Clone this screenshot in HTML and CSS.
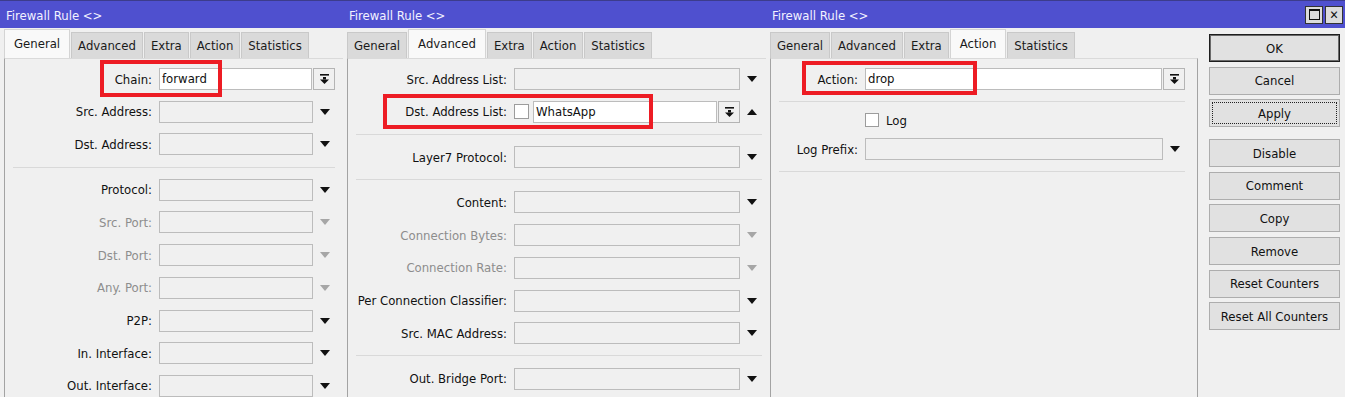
FILE: index.html
```html
<!DOCTYPE html>
<html lang="en">
<head>
    <meta charset="UTF-8">
    <title>Firewall Rule</title>
    <link rel="stylesheet" href="styles.css">
</head>
<body>
    <div class="screen">
        <!-- General tab -->
        <div class="window w1">
            <div class="titlebar"><span>Firewall Rule &lt;&gt;</span></div>
            <div class="body">
                <div class="tabs">
                    <div class="tab active">General</div>
                    <div class="tab">Advanced</div>
                    <div class="tab">Extra</div>
                    <div class="tab">Action</div>
                    <div class="tab">Statistics</div>
                </div>
                <div class="frame">
                    <div class="form">
                        <div class="row">
                            <label class="lbl">Chain:</label>
                            <div class="field filled narrow">forward</div>
                            <div class="combo-btn"><svg width="9" height="10" viewBox="0 0 9 10"><rect x="0" y="0" width="9" height="1.6" fill="#111"/><rect x="3" y="3" width="3" height="2.5" fill="#111"/><polygon points="0,5.5 9,5.5 4.5,10" fill="#111"/></svg></div>
                        </div>
                        <div class="row">
                            <label class="lbl">Src. Address:</label>
                            <div class="field"></div>
                            <div class="arrow"><span class="tri"></span></div>
                        </div>
                        <div class="row">
                            <label class="lbl">Dst. Address:</label>
                            <div class="field"></div>
                            <div class="arrow"><span class="tri"></span></div>
                        </div>
                        <div class="sep"></div>
                        <div class="row">
                            <label class="lbl">Protocol:</label>
                            <div class="field"></div>
                            <div class="arrow"><span class="tri"></span></div>
                        </div>
                        <div class="row">
                            <label class="lbl off">Src. Port:</label>
                            <div class="field"></div>
                            <div class="arrow"><span class="tri off"></span></div>
                        </div>
                        <div class="row">
                            <label class="lbl off">Dst. Port:</label>
                            <div class="field"></div>
                            <div class="arrow"><span class="tri off"></span></div>
                        </div>
                        <div class="row">
                            <label class="lbl off">Any. Port:</label>
                            <div class="field"></div>
                            <div class="arrow"><span class="tri off"></span></div>
                        </div>
                        <div class="row">
                            <label class="lbl">P2P:</label>
                            <div class="field"></div>
                            <div class="arrow"><span class="tri"></span></div>
                        </div>
                        <div class="row">
                            <label class="lbl">In. Interface:</label>
                            <div class="field"></div>
                            <div class="arrow"><span class="tri"></span></div>
                        </div>
                        <div class="row">
                            <label class="lbl">Out. Interface:</label>
                            <div class="field"></div>
                            <div class="arrow"><span class="tri"></span></div>
                        </div>
                    </div>
                </div>
            </div>
        </div>

        <!-- Advanced tab -->
        <div class="window w2">
            <div class="titlebar"><span>Firewall Rule &lt;&gt;</span></div>
            <div class="body">
                <div class="tabs">
                    <div class="tab">General</div>
                    <div class="tab active">Advanced</div>
                    <div class="tab">Extra</div>
                    <div class="tab">Action</div>
                    <div class="tab">Statistics</div>
                </div>
                <div class="frame">
                    <div class="form">
                        <div class="row">
                            <label class="lbl">Src. Address List:</label>
                            <div class="field"></div>
                            <div class="arrow"><span class="tri"></span></div>
                        </div>
                        <div class="row">
                            <label class="lbl">Dst. Address List:</label>
                            <div class="check"></div>
                            <div class="field filled short">WhatsApp</div>
                            <div class="combo-btn"><svg width="9" height="10" viewBox="0 0 9 10"><rect x="0" y="0" width="9" height="1.6" fill="#111"/><rect x="3" y="3" width="3" height="2.5" fill="#111"/><polygon points="0,5.5 9,5.5 4.5,10" fill="#111"/></svg></div>
                            <div class="arrow"><span class="tri up"></span></div>
                        </div>
                        <div class="sep"></div>
                        <div class="row">
                            <label class="lbl">Layer7 Protocol:</label>
                            <div class="field"></div>
                            <div class="arrow"><span class="tri"></span></div>
                        </div>
                        <div class="sep"></div>
                        <div class="row">
                            <label class="lbl">Content:</label>
                            <div class="field"></div>
                            <div class="arrow"><span class="tri"></span></div>
                        </div>
                        <div class="row">
                            <label class="lbl off">Connection Bytes:</label>
                            <div class="field"></div>
                            <div class="arrow"><span class="tri off"></span></div>
                        </div>
                        <div class="row">
                            <label class="lbl off">Connection Rate:</label>
                            <div class="field"></div>
                            <div class="arrow"><span class="tri off"></span></div>
                        </div>
                        <div class="row">
                            <label class="lbl">Per Connection Classifier:</label>
                            <div class="field"></div>
                            <div class="arrow"><span class="tri"></span></div>
                        </div>
                        <div class="row">
                            <label class="lbl">Src. MAC Address:</label>
                            <div class="field"></div>
                            <div class="arrow"><span class="tri"></span></div>
                        </div>
                        <div class="sep"></div>
                        <div class="row">
                            <label class="lbl">Out. Bridge Port:</label>
                            <div class="field"></div>
                            <div class="arrow"><span class="tri"></span></div>
                        </div>
                    </div>
                </div>
            </div>
        </div>

        <!-- Action tab + buttons -->
        <div class="window w3">
            <div class="titlebar">
                <span>Firewall Rule &lt;&gt;</span>
                <div class="win-ctrls">
                    <div class="win-btn"><span class="max-box"></span></div>
                    <div class="win-btn close">&#x2715;</div>
                </div>
            </div>
            <div class="body">
                <div class="main">
                    <div class="tabs">
                        <div class="tab">General</div>
                        <div class="tab">Advanced</div>
                        <div class="tab">Extra</div>
                        <div class="tab active">Action</div>
                        <div class="tab">Statistics</div>
                    </div>
                    <div class="frame boxed">
                        <div class="form">
                            <div class="row">
                                <label class="lbl">Action:</label>
                                <div class="field filled narrow">drop</div>
                                <div class="combo-btn"><svg width="9" height="10" viewBox="0 0 9 10"><rect x="0" y="0" width="9" height="1.6" fill="#111"/><rect x="3" y="3" width="3" height="2.5" fill="#111"/><polygon points="0,5.5 9,5.5 4.5,10" fill="#111"/></svg></div>
                            </div>
                            <div class="sep"></div>
                            <div class="row small">
                                <span class="lbl"></span>
                                <div class="check"></div>
                                <span class="check-text">Log</span>
                            </div>
                            <div class="row">
                                <label class="lbl">Log Prefix:</label>
                                <div class="field"></div>
                                <div class="arrow"><span class="tri"></span></div>
                            </div>
                            <div class="sep"></div>
                        </div>
                    </div>
                </div>
                <div class="buttons">
                    <div class="btn default">OK</div>
                    <div class="btn">Cancel</div>
                    <div class="btn focused">Apply</div>
                    <div class="btn spaced">Disable</div>
                    <div class="btn">Comment</div>
                    <div class="btn">Copy</div>
                    <div class="btn">Remove</div>
                    <div class="btn">Reset Counters</div>
                    <div class="btn">Reset All Counters</div>
                </div>
            </div>
        </div>

        <!-- red highlight marks drawn over the screenshot -->
        <div class="mark m1"></div>
        <div class="mark m2"></div>
        <div class="mark m3"></div>
    </div>
</body>
</html>
```

FILE: styles.css
```css
body {
    margin: 0;
    background: #f0f0f0;
    font-family: "DejaVu Sans Condensed", "DejaVu Sans", sans-serif;
    font-stretch: condensed;
    font-size: 13px;
    color: #111;
}
.screen {
    position: relative;
    display: flex;
    width: 1345px;
    height: 397px;
    overflow: hidden;
}
.window {
    display: flex;
    flex-direction: column;
    flex: none;
    height: 100%;
}
.w1 { width: 343px; --lw: 147px; --fw: 154px; --sw: 322px; }
.w2 { width: 423px; --lw: 159px; --fw: 226px; --sw: 406px; }
.w3 { width: 579px; --lw: 87px; --fw: 298px; --sw: 406px; }

.titlebar {
    height: 28px;
    flex: none;
    box-sizing: border-box;
    padding: 2px 2px 0 6px;
    background: #4f50cf;
    color: #f2f2ff;
    display: flex;
    align-items: center;
    justify-content: space-between;
    border-top: 1px solid #3c3c8c;
}
.win-ctrls {
    display: flex;
    gap: 2px;
    margin-top: -2px;
}
.win-btn {
    width: 16px;
    height: 16px;
    background: #dcdcdc;
    border: 1px solid #333;
    display: flex;
    align-items: center;
    justify-content: center;
    color: #111;
    font-size: 12px;
    font-weight: bold;
    line-height: 1;
}
.max-box {
    width: 9px;
    height: 8px;
    border: 1px solid #111;
    border-top-width: 2px;
}

.body {
    flex: 1;
    display: flex;
    flex-direction: column;
    padding-left: 4px;
}
.w3 .body {
    flex-direction: row;
}
.main {
    display: flex;
    flex-direction: column;
    width: 428px;
}

.tabs {
    display: flex;
    align-items: flex-end;
    height: 30px;
    flex: none;
}
.tab {
    height: 26px;
    box-sizing: border-box;
    padding: 0 6px;
    margin-right: 1px;
    background: #dadada;
    border: 1px solid #c9c9c9;
    border-bottom: none;
    display: flex;
    align-items: center;
    color: #1a1a1a;
}
.tab.active {
    height: 29px;
    padding: 0 9px;
    background: #f9f9f9;
    border-color: #d4d4d4;
    padding-bottom: 2px;
}

.frame {
    flex: 1;
    border-left: 1px solid #a3a3a3;
    border-top: 1px solid #dadada;
    padding-top: 9px;
}
.frame.boxed {
    border-right: 1px solid #a3a3a3;
}
.form {
    display: flex;
    flex-direction: column;
    gap: 10.7px;
}
.row {
    display: flex;
    align-items: center;
    height: 22px;
}
.row.small {
    height: 14px;
}
.lbl {
    width: var(--lw);
    margin-right: 7px;
    text-align: right;
    white-space: nowrap;
    flex: none;
}
.lbl.off {
    color: #8d8d8d;
}
.field {
    width: var(--fw);
    height: 22px;
    box-sizing: border-box;
    border: 1px solid #bcbcbc;
    background: #f0f0f0;
    padding: 0 2px;
    line-height: 20px;
    flex: none;
}
.field.filled {
    background: #fff;
}
.field.narrow {
    width: calc(var(--fw) - 1px);
}
.field.short {
    width: 184px;
}
.combo-btn {
    width: 22px;
    height: 22px;
    margin-left: 1px;
    box-sizing: border-box;
    border: 1px solid #b4b4b4;
    background: #f0f0f0;
    display: flex;
    align-items: center;
    justify-content: center;
    flex: none;
}
.arrow {
    width: 23px;
    display: flex;
    justify-content: center;
    flex: none;
}
.tri {
    width: 0;
    height: 0;
    border-left: 5.5px solid transparent;
    border-right: 5.5px solid transparent;
    border-top: 6px solid #111;
}
.tri.up {
    border-top: none;
    border-bottom: 6px solid #111;
}
.tri.off {
    border-top-color: #a6a6a6;
}
.check {
    width: 15px;
    height: 15px;
    box-sizing: border-box;
    background: #fff;
    border: 1px solid #9c9c9c;
    margin-right: 4px;
    flex: none;
}
.row.small .check {
    width: 14px;
    height: 14px;
    margin-right: 7px;
}
.sep {
    width: var(--sw);
    height: 1px;
    margin: 0.5px 0 0.5px 8px;
    background: #d9d9d9;
}

.buttons {
    display: flex;
    flex-direction: column;
    gap: 4.6px;
    padding-top: 6px;
    margin-left: 11px;
}
.btn {
    width: 131px;
    height: 28px;
    box-sizing: border-box;
    background: #e1e1e1;
    border: 1px solid #adadad;
    display: flex;
    align-items: center;
    justify-content: center;
    color: #111;
}
.btn.default {
    border-color: #1e1e1e;
    box-shadow: inset 0 0 0 1px #6a6a6a;
}
.btn.focused {
    outline: 1px dotted #222;
    outline-offset: -4px;
}
.btn.spaced {
    margin-top: 7.5px;
}

.mark {
    position: absolute;
    border: 4px solid #ed1c24;
    box-sizing: border-box;
}
.m1 { left: 100px; top: 60px; width: 122px; height: 37px; }
.m2 { left: 383px; top: 94px; width: 270px; height: 35px; }
.m3 { left: 802px; top: 61px; width: 175px; height: 34px; }
```
